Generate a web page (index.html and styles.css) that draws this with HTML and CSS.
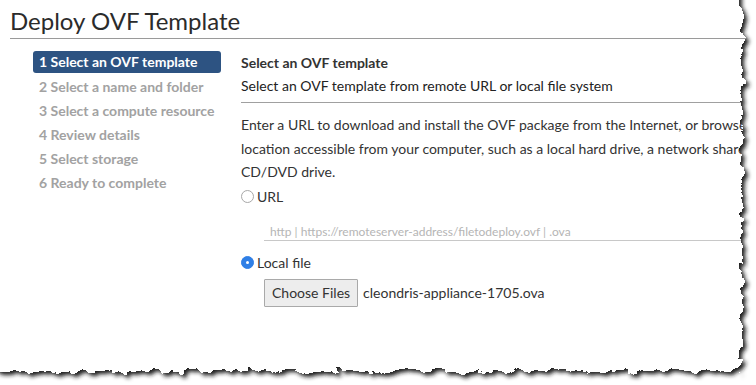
FILE: index.html
```html
<!DOCTYPE html>
<html lang="en">
<head>
    <meta charset="UTF-8">
    <title>Deploy OVF Template</title>
    <link rel="stylesheet" href="styles.css">
</head>
<body>
    <div class="page">
        <h1 class="title">Deploy OVF Template</h1>

        <div class="wizard">
            <ul class="steps">
                <li class="step active">1 Select an OVF template</li>
                <li class="step">2 Select a name and folder</li>
                <li class="step">3 Select a compute resource</li>
                <li class="step">4 Review details</li>
                <li class="step">5 Select storage</li>
                <li class="step">6 Ready to complete</li>
            </ul>

            <div class="content">
                <div class="content-head">
                    <div class="content-title">Select an OVF template</div>
                    <div class="content-sub">Select an OVF template from remote URL or local file system</div>
                </div>

                <p class="intro">Enter a URL to download and install the OVF package from the Internet, or browse to a location accessible from your computer, such as a local hard drive, a network share, or a CD/DVD drive.</p>

                <label class="radio">
                    <span class="dot"></span>URL
                </label>
                <div class="url-field">
                    <input type="text" placeholder="http | https://remoteserver-address/filetodeploy.ovf | .ova">
                </div>

                <label class="radio">
                    <span class="dot checked"></span>Local file
                </label>
                <div class="file-row">
                    <button class="file-btn">Choose Files</button>
                    <span class="file-name">cleondris-appliance-1705.ova</span>
                </div>
            </div>
        </div>
    </div>

    <!-- torn paper edge drawn over the right and bottom of the page -->
    <svg class="torn" width="756" height="385" viewBox="0 0 756 385">
        <defs>
            <filter id="rough" filterUnits="userSpaceOnUse" x="-40" y="-40" width="840" height="470">
                <feTurbulence type="fractalNoise" baseFrequency="0.09" numOctaves="4" seed="7" result="noise"/>
                <feDisplacementMap in="SourceGraphic" in2="noise" scale="13" xChannelSelector="R" yChannelSelector="G"/>
            </filter>
            <filter id="shade" filterUnits="userSpaceOnUse" x="-40" y="-40" width="840" height="470">
                <feTurbulence type="fractalNoise" baseFrequency="0.09" numOctaves="4" seed="7" result="noise"/>
                <feDisplacementMap in="SourceGraphic" in2="noise" scale="13" xChannelSelector="R" yChannelSelector="G" result="edge"/>
                <feOffset in="edge" dx="3" dy="3" result="moved"/>
                <feGaussianBlur in="moved" stdDeviation="2"/>
            </filter>
            <mask id="outside" maskUnits="userSpaceOnUse" x="0" y="0" width="756" height="385">
                <rect x="0" y="0" width="756" height="385" fill="#fff"/>
                <rect x="-30" y="-30" width="772" height="401" fill="#000" filter="url(#rough)"/>
            </mask>
        </defs>
        <rect x="0" y="0" width="756" height="385" fill="#fff" mask="url(#outside)"/>
        <rect x="-30" y="-30" width="772" height="401" fill="#1e1e1e" filter="url(#shade)" mask="url(#outside)"/>
    </svg>
</body>
</html>
```

FILE: styles.css
```css
body {
    margin: 0;
    width: 756px;
    height: 385px;
    overflow: hidden;
    position: relative;
    background: #fff;
    font-family: Lato, "Open Sans", sans-serif;
    color: #333;
}
.page {
    width: 900px;
}
.title {
    margin: 0 0 0 10px;
    padding-top: 9px;
    padding-bottom: 5px;
    font-size: 24px;
    line-height: 24px;
    font-weight: 400;
    color: #2b2b2b;
    border-bottom: 1px solid #9a9a9a;
}
.wizard {
    display: flex;
    padding-top: 12px;
}
.steps {
    list-style: none;
    margin: 0 0 0 33px;
    padding: 0;
    width: 188px;
    flex: none;
}
.step {
    height: 24px;
    line-height: 23px;
    padding-left: 6px;
    font-size: 14px;
    font-weight: 700;
    color: #a2a2a2;
}
.step.active {
    height: 22px;
    line-height: 21px;
    margin-bottom: 2px;
    background: #2d5382;
    color: #fff;
    border-radius: 3px;
}
.content {
    margin-left: 20px;
    flex: 1;
    font-size: 14px;
}
.content-head {
    border-bottom: 1px solid #a0a0a0;
    padding-bottom: 4px;
}
.content-title {
    font-size: 14px;
    font-weight: 700;
    line-height: 22px;
    padding-top: 1px;
}
.content-sub {
    line-height: 24px;
    color: #222;
}
.intro {
    margin: 10px 0 2px;
    width: 560px;
    line-height: 23.5px;
    color: #333;
}
.radio {
    display: flex;
    align-items: center;
    height: 22px;
    color: #333;
}
.dot {
    width: 11px;
    height: 11px;
    border: 1px solid #a8a8a8;
    border-radius: 50%;
    margin-right: 3px;
    box-sizing: content-box;
    position: relative;
}
.dot.checked {
    border-color: #2f7fe6;
    background: #2f7fe6;
}
.dot.checked::after {
    content: "";
    position: absolute;
    left: 4px;
    top: 4px;
    width: 3px;
    height: 3px;
    border-radius: 50%;
    background: #fff;
}
.url-field {
    margin: 8px 0 11px 23px;
}
.url-field input {
    display: block;
    width: 100%;
    box-sizing: border-box;
    border: none;
    border-bottom: 1px solid #c8c8c8;
    padding: 8px 6px 1px;
    font-family: Lato, "Open Sans", sans-serif;
    font-size: 12px;
    line-height: 15px;
    outline: none;
}
.url-field input::placeholder {
    color: #b5b5b5;
}
.file-row {
    display: flex;
    align-items: center;
    margin: 5px 0 0 23px;
}
.file-btn {
    height: 28px;
    padding: 0 7px;
    background: #ededed;
    border: 1px solid #a9a9a9;
    border-radius: 1px;
    font-family: Lato, "Open Sans", sans-serif;
    font-size: 14px;
    color: #333;
}
.file-name {
    margin-left: 5px;
}
.torn {
    position: absolute;
    left: 0;
    top: 0;
}
```
